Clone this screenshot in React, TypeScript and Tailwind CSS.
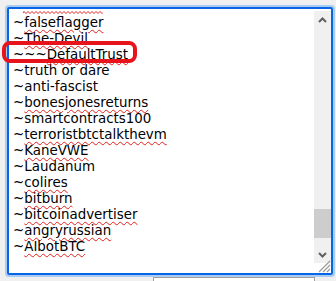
import React from 'react'

const names: { t: string; bad: boolean }[] = [
  { t: '~falseflagger', bad: true },
  { t: '~The-Devil', bad: true },
  { t: '~~~DefaultTrust', bad: true },
  { t: '~truth or dare', bad: false },
  { t: '~anti-fascist', bad: false },
  { t: '~bonesjonesreturns', bad: true },
  { t: '~smartcontracts100', bad: false },
  { t: '~terroristbtctalkthevm', bad: true },
  { t: '~KaneVWE', bad: true },
  { t: '~Laudanum', bad: false },
  { t: '~colires', bad: true },
  { t: '~bitburn', bad: true },
  { t: '~bitcoinadvertiser', bad: true },
  { t: '~angryrussian', bad: true },
  { t: '~AIbotBTC', bad: true },
]

function Line({ t, bad }: { t: string; bad: boolean }) {
  const tilde = t.match(/^~+/)?.[0] ?? ''
  const rest = t.slice(tilde.length)
  return (
    <div className="h-4 leading-4 whitespace-pre">
      {tilde}
      <span className={bad ? 'underline decoration-wavy decoration-[#e0201c] decoration-1 underline-offset-2' : ''}>{rest}</span>
    </div>
  )
}

// spell-check squiggle left from the line scrolled out above
function Squiggle({ width }: { width: number }) {
  let d = 'M0 2'
  for (let x = 0; x < width; x += 4) d += ` L${x + 1} 0.5 L${x + 3} 2.5 L${x + 4} 1.5`
  return (
    <svg width={width} height="3" viewBox={`0 0 ${width} 3`} className="block">
      <path d={d} fill="none" stroke="#e0201c" strokeWidth="1" />
    </svg>
  )
}

export default function App() {
  return (
    <div className="relative w-[336px] h-[281px] overflow-hidden bg-[#f0f0f0] font-['DejaVu_Sans',Verdana,sans-serif] text-[13.4px] text-black">
      <div className="absolute left-[5px] top-[5px] w-[330px] h-[272px] rounded-[4px] border-2 border-[#a9cdf2]">
        <div className="flex h-full w-full rounded-[2px] border-2 border-[#0a64e6] bg-white overflow-hidden">
          <div className="flex-1 overflow-hidden pl-[4px]">
            <div className="pl-[10px] pt-[2px] h-[6px]">
              <Squiggle width={80} />
            </div>
            {names.map((n) => (
              <Line key={n.t} t={n.t} bad={n.bad} />
            ))}
          </div>
          <div className="w-[17px] flex flex-col bg-[#f0f0f0] mt-[2px]">
            <div className="h-[17px] flex items-center justify-center">
              <svg width="9" height="6" viewBox="0 0 9 6">
                <path d="M1 5 L4.5 1.5 L8 5" fill="none" stroke="#606060" strokeWidth="2" />
              </svg>
            </div>
            <div className="flex-1 relative">
              <div className="absolute left-0 right-0 top-[181px] h-[29px] bg-[#cdcdcd]" />
            </div>
            <div className="h-[17px] flex items-center justify-center">
              <svg width="9" height="6" viewBox="0 0 9 6">
                <path d="M1 1 L4.5 4.5 L8 1" fill="none" stroke="#606060" strokeWidth="2" />
              </svg>
            </div>
            <div className="h-[10px] bg-white" />
          </div>
        </div>
        <svg className="absolute right-[2px] bottom-[2px]" width="14" height="14" viewBox="0 0 14 14">
          <path d="M13 2 L2 13 M13 6 L6 13 M13 10 L10 13" stroke="#9a9a9a" strokeWidth="1.2" />
        </svg>
      </div>
      <div className="absolute left-[153px] top-[277px] w-[162px] h-[10px] bg-white border-t border-l border-r border-[#a0a0a0]" />
      <div className="absolute left-[2px] top-[41px] w-[135px] h-[22px] rounded-[8px] border-[4px] border-[#e8141c]" />
    </div>
  )
}
